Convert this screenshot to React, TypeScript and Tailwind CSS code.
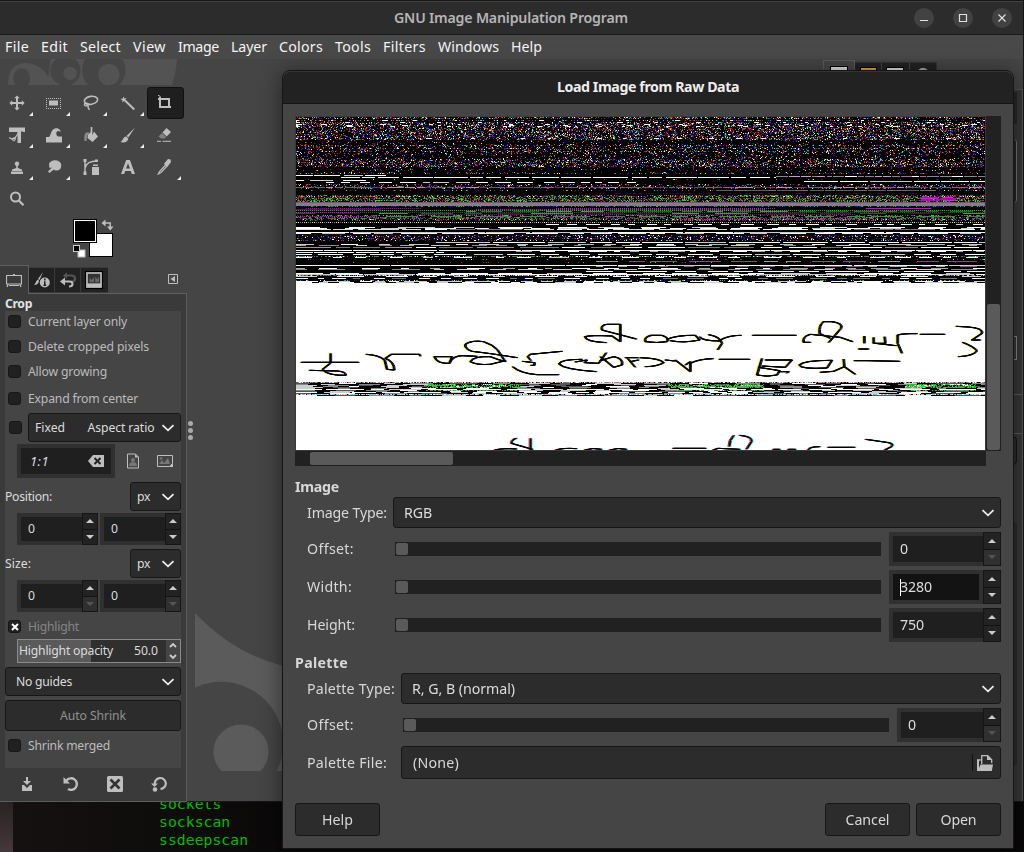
import { useLayoutEffect, useRef, type ReactNode } from "react";

/* Text whose tracking is adjusted so that it fills a given width. */
function T({ w, className = "", children }: { w: number; className?: string; children: string }) {
  const ref = useRef<HTMLSpanElement>(null);
  useLayoutEffect(() => {
    const el = ref.current;
    if (!el) return;
    el.style.letterSpacing = "0px";
    const natural = el.getBoundingClientRect().width;
    el.style.letterSpacing = `${(w - natural) / children.length}px`;
  }, [w, children]);
  return (
    <span ref={ref} className={`inline-block shrink-0 whitespace-pre ${className}`}>
      {children}
    </span>
  );
}

/* ---------- raw data preview ---------- */

function mulberry(seed: number) {
  let a = seed;
  return () => {
    a = (a + 0x6d2b79f5) | 0;
    let t = Math.imul(a ^ (a >>> 15), 1 | a);
    t = (t + Math.imul(t ^ (t >>> 7), 61 | t)) ^ t;
    return ((t ^ (t >>> 14)) >>> 0) / 4294967296;
  };
}

const PW = 689;
const PH = 333;
const VIVID = ["#f00", "#f33", "#00f", "#22f", "#0ff", "#ff0", "#800", "#008080", "#808", "#080", "#fff", "#a33", "#39c", "#c93", "#6a6", "#c06"];
const GREENISH = ["#0c0", "#060", "#7a7", "#707", "#555", "#0f0", "#840", "#c22"];
const PALE = ["#fff", "#fff", "#fff", "#ccc", "#ffd", "#dff"];

const SCRIPT_LEFT =
  "M33,217H205M121,190V219L97,238Q110,257 166,256Q168,245 140,243L58,241M228,193Q265,195 283,210L290,238L312,240Q312,215 285,205L303,193H388L390,199M432,200H485L478,220Q440,222 432,200M478,216Q490,198 515,197L560,199M680,203Q600,190 545,184Q520,175 526,162Q545,150 580,155Q610,165 622,180L645,215Q620,208 600,200Q550,198 540,215Q560,226 600,223L645,212M815,184L720,193L712,200L722,212M697,214L733,218L732,226L722,226M667,230Q690,250 740,254H805M875,208Q810,208 806,222Q820,238 918,245M855,216L890,210L883,218L925,220L948,188M930,200Q950,215 970,232L995,225Q1000,205 970,200L930,212M1005,203H1050M1012,205L1035,232M1020,215L1045,210M1038,147L935,120Q930,105 950,103H990V155L965,138Q900,135 884,140Q885,155 948,158";
const SCRIPT_RIGHT =
  "M35,136Q10,140 15,155Q50,160 80,155Q90,145 65,136L30,136M80,148Q110,135 165,136L178,150Q130,160 90,152M178,140Q185,153 240,153M205,134Q240,140 245,160L232,180M240,150Q265,136 302,136M337,136H467M510,133Q485,140 490,157H510M510,133L600,142L637,155M550,95Q535,105 538,130M550,95H580M575,95Q610,100 602,115L565,158M537,130L570,145M672,138V160M655,177H685M700,142L700,160H735L733,140M705,160L767,167M785,190L772,160V135Q790,130 830,131M840,133H913M948,109L985,111Q1030,115 1025,130L995,150H1020M967,157Q1000,170 1010,182Q1000,198 955,200M0,203Q60,205 70,218Q50,230 15,230M75,210L105,213M105,210L150,245V215L135,225M150,220Q175,207 218,206M237,208H328M365,205L350,255Q380,262 410,255L418,242L355,232M375,210H455L435,232L365,228M415,245H445L440,250M575,211Q490,211 477,225Q480,238 560,234L575,211M610,207L612,230L645,253M540,247L580,244L612,230M642,212H682L778,214";
const ECHO_LEFT =
  "M615,480Q640,474 680,477M728,478L665,460Q665,448 680,445M722,445V480M798,480Q820,473 860,476M885,480Q910,472 935,478M960,480Q985,472 1010,478";
const ECHO_RIGHT =
  "M100,475H198M220,480L235,475L300,478M282,436Q268,450 268,470M300,436Q340,440 335,455L320,478M505,480Q508,470 540,470M565,472H645M678,448L740,457Q765,460 755,470L735,480M400,478h20M445,478h22";

function paint(ctx: CanvasRenderingContext2D) {
  const rnd = mulberry(4211);
  const pick = (c: string[]) => c[Math.floor(rnd() * c.length)];
  ctx.fillStyle = "#000";
  ctx.fillRect(0, 0, PW, PH);

  const dots = (y: number, density: number, colors: string[], x0 = 0, x1 = PW) => {
    for (let x = x0; x < x1; x++) {
      if (rnd() < density) {
        ctx.fillStyle = pick(colors);
        ctx.fillRect(x, y, 1, 1);
      }
    }
  };
  const dashes = (y: number, on: number, off: number, colors: string[], x0 = 0, x1 = PW) => {
    let x = x0;
    while (x < x1) {
      const len = Math.min(x1 - x, on * (0.5 + rnd()));
      ctx.fillStyle = pick(colors);
      ctx.fillRect(Math.round(x), y, Math.round(len), 1);
      x += len + off * (0.4 + rnd());
    }
  };
  /* a row with one colour on every other pixel */
  const beads = (y: number, color: string, x0 = 0, x1 = PW) => {
    ctx.fillStyle = color;
    for (let x = x0; x < x1; x += 2) ctx.fillRect(x, y, 1, 1);
  };

  for (let y = 0; y < 57; y++) {
    let d = 0.36;
    if (y === 2 || y === 4) d = 0.04;
    if (y > 22 && y < 27) d = 0.07;
    if (y >= 27 && y < 37) d = y % 3 === 1 ? 0.4 : 0.19;
    if (y >= 37 && y < 42) d = 0.13;
    if (y >= 42 && y < 50) d = y % 2 ? 0.4 : 0.28;
    if (y >= 50) d = y % 3 === 0 ? 0.02 : 0.12;
    if (y === 56) d = 0.3;
    dots(y, d, VIVID);
  }
  for (const y of [3, 5, 7, 8, 9, 21]) dashes(y, 4, 40, ["#fff"]);

  dashes(58, 20, 2, PALE, 0, 90);
  dashes(59, 9, 1, ["#c9c", "#979", "#fff", "#888"], 480, PW);
  dashes(60, 24, 3, PALE, 45, 480);
  dashes(63, 16, 10, PALE, 0, 72);
  dashes(64, 30, 2, PALE, 508, PW);
  dashes(65, 11, 8, PALE, 30, 340);
  for (const y of [62, 67, 68, 69, 71, 73]) dots(y, y === 62 ? 0.05 : 0.22, VIVID);
  dashes(70, 12, 1, ["#a4a", "#666", "#b8b", "#636"]);
  dashes(73, 14, 1, ["#565", "#766"], 420, 640);
  dots(76, 0.5, ["#404"], 300, 650);
  for (let y = 78; y < 86; y++) dots(y, y % 2 ? 0.65 : 0.42, y === 79 ? VIVID : GREENISH);
  for (let y = 80; y < 84; y++) dashes(y, 16, 6, ["#b0b", "#e1e"], 625, 660);
  ctx.fillStyle = "#808080";
  ctx.fillRect(0, 86, PW, 3);
  ctx.fillStyle = "#8a4a8a";
  ctx.fillRect(0, 85, PW, 1);
  dots(89, 0.7, ["#00f", "#0c0", "#408", "#000"]);
  beads(91, "#a0a", 10, 125);
  beads(91, "#666", 260, 480);
  dashes(91, 80, 2, ["#d0d"], 570, 635);
  dashes(92, 40, 2, ["#606"], 0, 85);
  beads(92, "#c0c", 180, 470);
  beads(93, "#0c0");
  dashes(94, 20, 9, ["#555", "#777", "#070"], 170, PW);
  beads(95, "#f0f", 0, 60);
  beads(95, "#070", 60, PW);
  dashes(96, 30, 16, ["#505", "#777", "#444"]);
  beads(97, "#90a", 120, 560);
  dots(98, 0.5, GREENISH);
  beads(99, "#e0e", 0, 82);
  dashes(99, 26, 12, ["#666", "#484"], 90, PW);
  dots(100, 0.55, ["#0c0", "#777", "#555", "#909", "#060"]);
  dots(101, 0.6, ["#0a0", "#777", "#555", "#707"]);
  dots(102, 0.5, VIVID);
  beads(102, "#e0e", 380, 560);
  for (let x = 0; x < PW; x += 2) {
    ctx.fillStyle = ["#ff0", "#fff", "#09f", "#f60"][(x / 2) % 4];
    ctx.fillRect(x, 105, 1, 1);
  }
  dots(103, 0.3, GREENISH);
  dashes(107, 10, 12, PALE, 250);
  dashes(110, 26, 22, PALE);
  dashes(111, 22, 14, PALE);
  dashes(112, 30, 4, ["#ddd", "#fff", "#868"]);
  dashes(115, 60, 1, PALE);
  dashes(116, 26, 9, PALE);
  for (let y = 118; y < 124; y++) dots(y, 0.26, y % 2 ? [...VIVID, "#fff", "#fff"] : ["#505", "#224", "#fff", "#f0f", "#00f"]);
  dashes(125, 40, 3, PALE, 140);
  dashes(127, 16, 20, ["#cca", "#9cc", "#fff"]);
  dashes(128, 14, 16, ["#9a9", "#889", "#ccc"]);
  dashes(130, 26, 5, ["#777", "#a8a", "#fff"]);
  dashes(133, 50, 1, PALE);
  dashes(134, 12, 10, ["#aaa", "#fff"], 220);
  dashes(135, 16, 2, ["#cff", "#ffc", "#fff"], 0, 148);
  dashes(137, 24, 8, PALE);
  dots(139, 0.65, ["#858", "#0a0", "#777", "#fff"]);
  dashes(140, 14, 18, PALE);
  dots(142, 0.13, VIVID);
  dashes(144, 22, 12, ["#848", "#999", "#666"], 300);
  dots(145, 0.06, ["#0f0", "#f00", "#00f"]);
  dashes(148, 70, 1, PALE);
  dashes(149, 12, 12, ["#858", "#aaa"], 300);
  dashes(151, 12, 20, ["#aaa", "#fff"]);
  dashes(152, 20, 13, ["#888", "#ccc"]);
  dashes(154, 30, 10, PALE, 290);
  dashes(156, 26, 14, PALE);
  dashes(157, 48, 1, PALE);
  dots(158, 0.7, ["#888", "#b7b", "#fff", "#355"]);
  dashes(159, 20, 25, PALE);
  dashes(161, 12, 12, ["#777", "#eee"]);
  dots(163, 0.3, ["#fff", "#0c0", "#999", "#00f"]);
  dashes(164, 20, 8, ["#ccc", "#fff"]);
  dashes(165, 14, 13, ["#ccc", "#fff"]);

  ctx.fillStyle = "#fff";
  ctx.fillRect(0, 166, PW, 99);
  ctx.fillRect(0, 279, PW, PH - 279);

  for (let y = 265; y < 279; y++) {
    if (y === 265) dots(y, 0.85, ["#fff", "#888", "#c9c", "#f66", "#555"]);
    else if (y === 277) dots(y, 0.85, ["#fff", "#0ff", "#99f", "#fa8"]);
    else if (y === 275 || y === 272) dashes(y, 26, 7, PALE);
    else dashes(y, 18, 22, ["#fff", "#888", "#ccc", "#555"]);
  }
  for (const [a, b] of [[130, 225], [372, 468], [610, 680]]) {
    for (const y of [267, 268, 269, 270, 273]) dots(y, 0.5, ["#0f0", "#0c0", "#777"], a, b);
  }

  const ink = (ox: number, d: string, left: string, right: string) => {
    const path = new Path2D(d);
    const layers: [number, string, number][] = [
      [-4.5, left, 3], [4, right, 3], [-1.6, "#000", 2.8], [0, "#000", 2.8], [1.6, "#000", 2.8],
    ];
    for (const [dx, color, width] of layers) {
      ctx.setTransform(1 / 3, 0, 0, 1 / 3, ox + dx / 3, 173);
      ctx.strokeStyle = color;
      ctx.lineWidth = width;
      ctx.stroke(path);
    }
  };
  ink(-6, SCRIPT_LEFT, "#ff0", "#00d");
  ink(344, SCRIPT_RIGHT, "#ff0", "#008");
  ink(-6, ECHO_LEFT, "#e00", "#0ff");
  ink(344, ECHO_RIGHT, "#e00", "#0ff");
  ctx.setTransform(1, 0, 0, 1, 0, 0);
}

function RawPreview() {
  const ref = useRef<HTMLCanvasElement>(null);
  useLayoutEffect(() => {
    const ctx = ref.current?.getContext("2d");
    if (ctx) paint(ctx);
  }, []);
  return <canvas ref={ref} width={PW} height={PH} className="mt-px ml-px block h-[333px] w-[689px]" />;
}

/* ---------- icons ---------- */

function Icon({ children, className = "h-4 w-4" }: { children: ReactNode; className?: string }) {
  return (
    <svg viewBox="0 0 16 16" className={`block shrink-0 ${className}`} fill="#bebebe" stroke="none">
      {children}
    </svg>
  );
}

const S = { fill: "none", stroke: "#bebebe" };

const toolIcons: { icon: ReactNode; more?: boolean; on?: boolean }[] = [
  { more: true, icon: <path d="M7 3.200H5.200L8 .4l2.800 2.800H9V7h3.800V5.200L15.600 8l-2.800 2.800V9H9v3.800h1.800L8 15.600l-2.800-2.800H7V9H3.200v1.800L.4 8l2.800-2.800V7H7z" /> },
  { more: true, icon: <><rect x="3" y="5.500" width="9" height="5" /><path d="M0 3.500h15M0 13.500h15M.5 3v11M14.500 3v11" {...S} strokeWidth="1" strokeDasharray="1 1" /></> },
  { more: true, icon: <><ellipse cx="8" cy="5.300" rx="6.700" ry="4" {...S} strokeWidth="1.600" transform="rotate(-10 8 5.300)" /><path d="M2 8c-1.500 2.500 1 3.500 2.800 2.300S4 7.500 2.500 9M5 10.500l.3 2.500 1.200 1.800" {...S} strokeWidth="1.400" /></> },
  { more: true, icon: <><path d="M3.500 1.500l1 2 2.300-.4-1.600 1.700 1 2.200-2.200-1-1.800 1.600.3-2.300L.5 4l2.300-.4z" /><path d="M5 5.500l9.300 9" {...S} strokeWidth="2" /></> },
  { on: true, icon: <><path d="M1 4h11v9M3 1.500V12h9.500" {...S} strokeWidth="2" /><path d="M13.500 11v2M1 .5h1.500" {...S} /></> },
  { more: true, icon: <><path d="M0 .5h16v4.800l-4-1V16H8.500V5H0z" /><path d="M10 5L5 12.500M0 10.500l3 1.500 4-1" {...S} strokeWidth="1.300" /><circle cx="4.800" cy="12.300" r="1.500" {...S} /></> },
  { more: true, icon: <path d="M0 15.500V10h3C5 9 4.500 2 10 1.200c3 0 4.800 2 4.500 4-1-1.400-2.500-1.700-3.500-.8-1.500 1.800-.5 4.500 1.500 5.100H16v6z" /> },
  { more: true, icon: <><path d="M8.500 0v8" {...S} strokeWidth="1.700" /><path d="M5 7.500L8 5l1.500 3L11 4.500l4 5L9.500 15 4.500 11z" /><path d="M6 5C1 5 1 9 1.500 14h2.300c0-3-.3-5 1.700-7z" fill="#888" /></> },
  { more: true, icon: <><path d="M15 .5L6.500 9l1.800 1.600z" /><path d="M6 9.500c-3 0-2.500 4-5.500 5.500 3 1.200 7.500.3 7.800-3.500z" /></> },
  { icon: <><path d="M9.500 1L14 5l-4.300 4.500L5.500 5.500z" /><path d="M5 6L9.200 10 7.500 11.500H4L1.500 9.500z" fill="#808080" /><path d="M0 14.300h4M5.500 14.300H14" {...S} strokeWidth="1" /></> },
  { more: true, icon: <><circle cx="8" cy="4.700" r="2.200" /><path d="M7.200 6h1.600v3l4.200 1.500V12H3v-1.500L7.200 9zM2 12.500h12V15H2z" /></> },
  { more: true, icon: <path d="M3 5C4 1 13-1 15 5c.8 3-.6 6-3.700 6.500-1.500.2-3-.2-3.500-1L3.500 14 2 12.600l4-4L3.500 9z" /> },
  { icon: <><path d="M2 1v14M2 9C3 4 8 2 14 2" {...S} strokeWidth="1.400" /><path d="M.5 0h3v3h-3zM.5 12.500h3V16h-3zM12 .5h3v2.500h-3zM9 8h7v8H9zM10 5.500h5V7h-5z" /></> },
  { icon: <path d="M6.200 1h3.700L15 15h-3.200l-1-3H5.200l-1 3H1zM8 4.200L6 9.600h4z" /> },
  { more: true, icon: <><path d="M9 5.500L2.500 12.500 1.300 15 4 13.500 10.500 6.500" {...S} strokeWidth="1.200" /><path d="M8 3.500L11 0l2.500.5L14 3l-3 4-1 .8L7 4.800z" /></> },
  { icon: <><circle cx="6.500" cy="6" r="4.500" {...S} strokeWidth="2" /><path d="M9.800 9.500L14.500 14.300" {...S} strokeWidth="2.300" /></> },
];

function Chevron() {
  return (
    <svg viewBox="0 0 14 8" className="h-2 w-3.5 shrink-0" fill="none" stroke="#eee" strokeWidth="1.800">
      <path d="M1.500 1.200L7 6.300l5.500-5.100" />
    </svg>
  );
}

function Check({ on }: { on?: boolean }) {
  return (
    <span className="flex h-[13px] w-[13px] shrink-0 items-center justify-center rounded-[3px] border border-[#171717] bg-[#212121]">
      {on && (
        <svg viewBox="0 0 8 8" className="h-2 w-2" stroke="#fff" strokeWidth="2">
          <path d="M1 1l6 6M7 1L1 7" />
        </svg>
      )}
    </span>
  );
}

function CheckRow({ label, w, h, on }: { label: string; w: number; h: string; on?: boolean }) {
  return (
    <div className={`flex items-center gap-[7px] pl-[3px] ${h}`}>
      <Check on={on} />
      <T w={w} className={on ? "mt-0.5 text-[#858585]" : "mt-0.5 text-[#bcbcbc]"}>{label}</T>
    </div>
  );
}

function Spin({ value, w, className, btn, down = true, focus }: { value: string; w: number; className: string; btn: string; down?: boolean; focus?: boolean }) {
  return (
    <div className={`flex shrink-0 bg-[#303030] ${className}`}>
      <div className={`my-1 ml-1 flex min-w-0 flex-1 items-center pl-[7px] ${focus ? "mr-1 bg-[#131313]" : "bg-[#1f1f1f]"}`}>
        {focus && <span className="-mr-px h-[17px] w-px bg-white" />}
        <T w={w} className="text-[#dcdcdc]">{value}</T>
      </div>
      <div className={`flex flex-col border border-[#151515] ${btn}`}>
        <div className="flex flex-1 items-center justify-center border-b border-[#111] bg-[#232323] pr-px">
          <svg viewBox="0 0 8 4" className="h-1 w-2" fill="#ccc"><path d="M0 4L4 0l4 4z" /></svg>
        </div>
        <div className={`flex flex-1 items-center justify-center pr-px ${down ? "bg-[#232323]" : "bg-[#303030]"}`}>
          <svg viewBox="0 0 8 4" className="h-1 w-2" fill={down ? "#ccc" : "#555"}><path d="M0 0l4 4 4-4z" /></svg>
        </div>
      </div>
    </div>
  );
}

function Combo({ children, className }: { children: ReactNode; className: string }) {
  return (
    <div className={`flex shrink-0 items-center justify-between rounded-[3px] border border-[#171717] bg-[#2c2c2c] text-[#dcdcdc] [&>span]:mt-0.5 ${className}`}>
      {children}
      <Chevron />
    </div>
  );
}

function Slider() {
  return (
    <div className="flex h-3.5 w-[486px] items-center bg-[#212121] pl-px">
      <div className="h-3 w-3 rounded-[2px] bg-[#5a5a5a]" />
    </div>
  );
}

/* ---------- main window ---------- */

const menus: [string, number][] = [
  ["File", 24], ["Edit", 27], ["Select", 41], ["View", 33], ["Image", 41], ["Layer", 36],
  ["Colors", 44], ["Tools", 36], ["Filters", 43], ["Windows", 61], ["Help", 31],
];

function TitleBar() {
  return (
    <div className="flex h-[34px] items-center border-b border-t border-b-[#1a1a1a] border-t-[#404040] bg-[#2c2c2c] pr-[11px]">
      <div className="flex flex-1 justify-center pl-[108px]">
        <T w={234} className="text-[14.2px] font-semibold text-[#b5b5b5]">GNU Image Manipulation Program</T>
      </div>
      <div className="flex gap-[19px]">
        {["M6 12.500h8", "M6.500 6.500h7v7h-7z", "M6.500 6.500l7 7M13.500 6.500l-7 7"].map((d) => (
          <svg key={d} viewBox="0 0 20 20" className="h-5 w-5 rounded-full bg-[#424242]" fill="none" stroke="#e0e0e0" strokeWidth="1.200">
            <path d={d} />
          </svg>
        ))}
      </div>
    </div>
  );
}

function Toolbox() {
  return (
    <div className="flex h-[206px] flex-col">
      <svg viewBox="0 0 560 78" className="block h-[26px] w-[187px]" preserveAspectRatio="none">
        <path d="M24 78Q24 12 80 12Q125 16 145 55L152 0H530Q528 38 515 78Z" fill="#535353" />
        <g fill="#454545">
          <ellipse cx="65" cy="58" rx="25" ry="30" /><circle cx="196" cy="35" r="45" /><circle cx="311" cy="33" r="65" />
        </g>
        <g fill="#535353"><circle cx="210" cy="43" r="20" /><circle cx="326" cy="47" r="32" /></g>
      </svg>
      <div className="mt-0.5 grid w-[185px] grid-cols-5">
        {toolIcons.map((t, i) => (
          <div key={i} className={`flex h-8 items-center rounded-[3px] pl-[9px] ${t.on ? "mr-px ml-[-1px] border border-[#111] bg-[#1f1f1f]" : ""}`}>
            <Icon className="h-4 w-4">{t.icon}</Icon>
            {t.more && <svg viewBox="0 0 4 4" className="mt-[22px] ml-1 h-1 w-1" fill="#eee"><path d="M4 0v4H0z" /></svg>}
          </div>
        ))}
      </div>
      <svg viewBox="0 0 42 40" className="mt-1 ml-[72px] h-10 w-[42px]">
        <rect x="17.500" y="14.500" width="23" height="23" fill="#fff" stroke="#000" />
        <rect x="1.500" y=".5" width="23" height="23" fill="#000" stroke="#000" />
        <rect x="2.500" y="1.500" width="21" height="21" fill="#000" stroke="#fff" />
        <rect x="6" y="31" width="7" height="7" fill="#fff" stroke="#bbb" />
        <rect x="1.500" y="26.500" width="6" height="6" fill="#000" stroke="#ccc" />
        <path d="M33.500 .5v7L29.500 4zM35 7.500h6.500L38.200 11.500z" fill="#bebebe" />
        <path d="M32 4h6.200v4" fill="none" stroke="#bebebe" strokeWidth="1.500" />
      </svg>
    </div>
  );
}

function DockTabs() {
  return (
    <div className="flex h-[29px] items-end text-[#bebebe]">
      <div className="flex h-[29px] w-[29px] items-center justify-center border-t border-r border-[#606060] bg-[#3a3a3a] pr-px">
        <Icon><path d="M.5 3.500h15v8.500H.5zM2 12.500l-1 2.500M14 12.500l1 2.500M3 13.500h10M7 2.500h2" {...S} strokeWidth="1.200" /></Icon>
      </div>
      <div className="flex h-[27px] w-[79px] gap-px border-b border-[#606060] bg-[#3a3a3a] py-px">
        <div className="flex w-[25px] items-center justify-center bg-[#222]">
          <Icon><path d="M9 0L4 7l1.500 1zM4 7.500C2 8.500 2 11 0 13c2 0 4.500-1 5-4z" /><circle cx="10.800" cy="10.500" r="5" /><path d="M10.800 6.500v2M10.800 9.300v4M9.500 13.300h2.700" stroke="#222" strokeWidth="1.500" /></Icon>
        </div>
        <div className="flex w-[25px] items-center justify-center bg-[#222]">
          <Icon><path d="M5 3.500h6.500q3.500 0 3.500 3t-3 3" fill="none" stroke="#555" strokeWidth="2.200" /><path d="M7 .5v6.500L3 3.500z" fill="#555" /><path d="M3 9.500h7q2.500 0 2.500 2.500T9 14.500" {...S} strokeWidth="2" /><path d="M5 5.500v8L0 9.500z" /></Icon>
        </div>
        <div className="flex flex-1 items-center justify-center bg-[#222] pr-0.5">
          <Icon className="h-[18px] w-[18px]"><path d="M0 0h16v16H0z" fill="#000" /><path d="M1 1h14v14H1z" /><path d="M2.500 2.500h11v8.500h-11z" fill="#333" /><path d="M4 10V6l2 2 2-3v5zM9 5l2 2 1.500-2v5H9z" fill="#666" /></Icon>
        </div>
      </div>
      <div className="flex h-[29px] flex-1 items-center justify-end border-b border-[#606060] pr-[9px]">
        <svg viewBox="0 0 10 10" className="h-2.5 w-2.5"><path d="M.5.5h9v9h-9z" fill="none" stroke="#bebebe" /><path d="M7 2v6L2.500 5z" fill="#bebebe" /></svg>
      </div>
    </div>
  );
}

function ToolOptions() {
  return (
    <div className="flex h-[508px] flex-col border-r border-b border-[#5c5c5c] bg-[#3a3a3a] pr-[5px] pl-[5px] text-[12.2px]">
      <div className="flex h-[17px] items-center pt-1"><T w={27} className="font-bold text-[#e2e2e2]">Crop</T></div>
      <div className="flex h-[457px] flex-col bg-[#454545]">
        <CheckRow label="Current layer only" w={99} h="h-[21px]" />
        <CheckRow label="Delete cropped pixels" w={121} h="h-7" />
        <CheckRow label="Allow growing" w={79} h="h-[23px]" />
        <CheckRow label="Expand from center" w={110} h="h-[30px]" />
        <div className="flex items-center pl-1">
          <Check />
          <Combo className="ml-1.5 h-[29px] w-[153px] pr-[5px] pl-1.5">
            <T w={30}>Fixed</T><T w={67} className="ml-4">Aspect ratio</T>
          </Combo>
        </div>
        <div className="mt-0.5 flex h-[34px] items-center pl-3">
          <div className="flex h-[34px] w-[98px] items-center justify-between border-4 border-[#303030] bg-[#1f1f1f] pr-[7px] pl-[9px]">
            <T w={19} className="text-[13px] text-[#dcdcdc] italic">1:1</T>
            <Icon><path d="M0 8l5-6h11v12H5z" /><path d="M6.500 5l6 6M12.500 5l-6 6" stroke="#222" strokeWidth="2" /></Icon>
          </div>
          <Icon className="ml-[10px] h-4 w-4"><path d="M2.500 1h8l3 3v11h-11z" {...S} /><path d="M10 1v3.500h3.500z" /><circle cx="8" cy="7" r="2" fill="#777" /><path d="M4 13q0-4 4-4t4 4z" fill="#777" /></Icon>
          <Icon className="ml-4 h-4 w-4"><path d="M.5 2.500h15v8l-3 3H.5z" {...S} /><path d="M2 11l3-4 2 3 4-5 2 6z" fill="#777" /><circle cx="4" cy="5.500" r="1.300" fill="#777" /><path d="M16 10v4h-4z" /></Icon>
        </div>
        {(["Position:", "Size:"] as const).map((name) => (
          <div key={name} className="mt-1">
            <div className="flex h-[29px] items-center justify-between text-[#dcdcdc]">
              <T w={name === "Size:" ? 26 : 47} className="mt-0.5">{name}</T>
              <Combo className="h-[29px] w-[51px] pr-[5px] pl-1.5"><T w={13}>px</T></Combo>
            </div>
            <div className="mt-[2px] flex gap-0.5 pl-3">
              <Spin value="0" w={7} className="h-8 w-[81px]" btn="w-4" down={name !== "Size:"} />
              <Spin value="0" w={7} className="h-8 w-[81px]" btn="w-4" down={name !== "Size:"} />
            </div>
          </div>
        ))}
        <CheckRow label="Highlight" w={51} h="h-[27px] pt-0.5" on />
        <div className="ml-3 flex h-6 items-center border border-[#8a8a8a] bg-[linear-gradient(90deg,#5a5a5a_45%,#2f2f2f_45%)] pl-px text-[#dcdcdc]">
          <T w={94}>Highlight opacity</T>
          <T w={24} className="ml-[21px]">50.0</T>
          <div className="ml-auto flex h-[22px] w-3.5 items-center justify-center bg-[#454545]">
            <svg viewBox="0 0 8 18" className="h-[18px] w-2" fill="none" stroke="#ccc" strokeWidth="1.800"><path d="M1 5l3-3 3 3M1 13l3 3 3-3" /></svg>
          </div>
        </div>
        <Combo className="mt-1 h-[29px] pr-[5px] pl-2.5"><T w={56}>No guides</T></Combo>
        <div className="mt-1 flex h-[31px] items-center justify-center rounded-[3px] border border-[#171717] bg-[#2c2c2c] text-[#909090]"><T w={66} className="mt-0.5">Auto Shrink</T></div>
        <CheckRow label="Shrink merged" w={82} h="h-[29px]" />
      </div>
      <div className="flex h-[31px] items-center gap-7 pl-[14px]">
        <Icon><path d="M7 1h2v4h3L8 9 4 5h3zM3 9h2l3 3 3-3h2v6H3z" /></Icon>
        <Icon><path d="M3.500 4.500A5.800 5.800 0 1 1 5 13" {...S} strokeWidth="2.400" /><path d="M.5 1v6.500H7z" /></Icon>
        <Icon><rect width="16" height="16" rx="1.500" /><path d="M3.500 3.500l9 9M12.500 3.500l-9 9" stroke="#333" strokeWidth="2.600" /></Icon>
        <Icon><path d="M4 9A5.500 5.500 0 1 1 9.500 13" {...S} strokeWidth="2.200" /><path d="M0 7.500h7L3.500 11z" /><circle cx="4" cy="13.500" r="2.300" /></Icon>
      </div>
    </div>
  );
}

function MainWindow() {
  return (
    <div className="flex h-[802px] w-[1024px] flex-col border-t border-r border-b border-[#161616] bg-[#454545]">
      <TitleBar />
      <div className="flex h-[24px] items-center gap-3 bg-[#494949] pl-[5px] text-[14.2px] text-[#f4f4f4]">
        {menus.map(([m, w]) => <T key={m} w={w}>{m}</T>)}
      </div>
      <div className="flex h-[742px]">
        <div className="w-[187px] shrink-0">
          <Toolbox />
          <DockTabs />
          <ToolOptions />
        </div>
        <div className="mr-px flex w-[7px] flex-col items-center justify-center gap-[2px]">
          <span className="h-[5px] w-[5px] rounded-full bg-[#aaa]" />
          <span className="h-[5px] w-[5px] rounded-full bg-[#aaa]" />
          <span className="h-[5px] w-[5px] rounded-full bg-[#aaa]" />
        </div>
        <svg viewBox="585 8 262 475" className="mt-[554px] block h-[158px] w-[88px] shrink-0" preserveAspectRatio="none">
          <path d="M585 8Q700 130 847 167V483H585Z" fill="#5b5b5b" />
          <path d="M585 232A185 185 0 0 1 828 483H585Z" fill="#454545" />
          <path d="M664 483A82 82 0 1 1 780 483Z" fill="#5b5b5b" />
        </svg>
        <div className="flex flex-1 flex-col">
          <div className="flex h-[30px] items-end pl-[540px]">
            <div className="flex h-[29px] w-8 justify-center border border-[#5c5c5c] pt-[5px]"><span className="h-5 w-[18px] border border-black bg-[#ddd]" /></div>
            <div className="flex h-[27px] w-[82px] gap-px border-t border-r border-[#333]">
              <div className="flex flex-1 justify-center bg-[#222] pt-1"><span className="h-5 w-[17px] border border-black bg-[#dda23f]" /></div>
              <div className="flex flex-1 justify-center bg-[#222] pt-1"><span className="h-5 w-[18px] border border-black bg-[#ddd]" /></div>
              <div className="flex flex-1 justify-center bg-[#222] pt-[5px]"><span className="h-[9px] w-[10px] rounded-full bg-[#aaa]" /></div>
            </div>
          </div>
          <div className="ml-auto flex h-[712px] w-[12px] flex-col border-t border-r border-[#555] bg-[#383838]">
            <div className="mt-0.5 h-8 w-[6px] bg-[#282828]" />
            <div className="mt-[15px] h-[64px] w-[6px] rounded-r border-r border-[#777] bg-[#242424]" />
            <div className="mt-[133px] h-6 w-[6px] border border-[#888]" />
            <div className="mt-[34px] h-[40px] w-full border-t border-b border-[#5c5c5c]" />
            <div className="mt-0.5 h-[29px] w-[6px] rounded-r border border-[#171717] bg-[#2c2c2c]" />
            <div className="mt-[57px] h-[244px] w-[6px] rounded-r bg-[#2c2c2c]" />
          </div>
        </div>
      </div>
    </div>
  );
}

/* ---------- dialog ---------- */

function RangeRow({ label, w, value, vw, palette, down = true, focus }: { label: string; w: number; value: string; vw: number; palette?: boolean; down?: boolean; focus?: boolean }) {
  return (
    <div className="mt-1 flex h-[34px] items-center pl-3">
      <div className={palette ? "w-24" : "w-[88px]"}><T w={w}>{label}</T></div>
      <Slider />
      <Spin value={value} w={vw} className={`ml-2 h-[34px] ${palette ? "w-[104px]" : "w-[112px]"}`} btn="w-[18px]" down={down} focus={focus} />
    </div>
  );
}

const button = "flex h-[33px] w-[85px] items-center justify-center rounded-[3px] border border-[#171717] bg-[#2c2c2c] pt-0.5";

function RawDialog() {
  return (
    <div className="absolute top-[70px] left-[282px] flex h-[779px] w-[732px] flex-col rounded-t-lg border border-[#151515] bg-[#454545] text-[14.2px] text-[#d8d8d8] shadow-[0_3px_22px_rgba(0,0,0,0.5)]">
      <div className="flex h-[33px] items-center justify-center rounded-t-lg border-t border-b border-t-[#333] border-b-[#151515] bg-[#222]">
        <T w={182} className="font-bold text-[#eee]">Load Image from Raw Data</T>
      </div>
      <div className="mt-3 flex h-[335px] pl-3">
        <div className="w-[691px] shrink-0 bg-[#3a3a3a]"><RawPreview /></div>
        <div className="flex w-[15px] flex-col justify-end bg-[#212121] px-px pb-px"><div className="h-[146px] rounded-[2px] bg-[#5a5a5a]" /></div>
      </div>
      <div className="ml-3 flex h-[15px] w-[691px] items-center bg-[#212121] pl-[15px]"><div className="h-[13px] w-[143px] rounded-[2px] bg-[#5a5a5a]" /></div>
      <div className="flex flex-col pr-3 pl-3">
        <div className="mt-[11px] flex h-5 items-center"><T w={44} className="font-bold">Image</T></div>
        <div className="flex h-[31px] items-center pl-3">
          <div className="w-[86px] pt-0.5"><T w={80}>Image Type:</T></div>
          <Combo className="h-[31px] w-[608px] pr-[5px] pl-2.5"><T w={28}>RGB</T></Combo>
        </div>
        <RangeRow label="Offset:" w={47} value="0" vw={8} down={false} />
        <RangeRow label="Width:" w={45} value="3280" vw={32} focus />
        <RangeRow label="Height:" w={48} value="750" vw={24} />
        <div className="mt-[11px] flex h-5 items-center"><T w={53} className="font-bold">Palette</T></div>
        <div className="flex h-[31px] items-center pl-3">
          <div className="w-[94px] pt-0.5"><T w={88}>Palette Type:</T></div>
          <Combo className="h-[31px] w-[600px] pr-[5px] pl-2.5"><T w={103}>R, G, B (normal)</T></Combo>
        </div>
        <RangeRow label="Offset:" w={47} value="0" vw={8} down={false} palette />
        <div className="mt-1 flex h-[33px] items-center pl-3">
          <div className="w-[94px] pt-0.5"><T w={80}>Palette File:</T></div>
          <div className="flex h-[33px] w-[600px] items-center justify-between rounded-[3px] border border-[#171717] bg-[#2c2c2c] pr-[7px] pl-[11px]">
            <T w={46} className="mt-0.5">(None)</T>
            <div className="flex h-[17px] items-center border-l border-[#111] pl-1">
              <Icon><path d="M.7 15.500V5h3" {...S} strokeWidth="1.400" /><path d="M4.700 9V.7h6l4 4V8" {...S} strokeWidth="1.300" /><path d="M10 0l5 5h-5zM3.500 9.500H16L14.800 16H0V5h2v8z" /></Icon>
            </div>
          </div>
        </div>
        <div className="mt-6 flex">
          <div className={button}><T w={31}>Help</T></div>
          <div className={`${button} ml-auto`}><T w={44}>Cancel</T></div>
          <div className={`${button} ml-1.5`}><T w={36}>Open</T></div>
        </div>
      </div>
    </div>
  );
}

export default function App() {
  return (
    <div className="relative flex h-[852px] w-[1024px] flex-col overflow-hidden bg-[#0b0909] font-['Noto_Sans',sans-serif] leading-none">
      <MainWindow />
      <div className="flex h-[50px] overflow-hidden">
        <div className="w-[13px] bg-[linear-gradient(#292224,#45383b)]" />
        <div className="-mt-[7px] flex-1 bg-[linear-gradient(90deg,#151111,#090707_30%)] pl-[146px] font-['DejaVu_Sans_Mono',monospace] text-[14.8px] leading-[18px] text-[#00bd00]">
          <div>sockets</div>
          <div>sockscan</div>
          <div>ssdeepscan</div>
          <div>strings</div>
        </div>
      </div>
      <RawDialog />
    </div>
  );
}
